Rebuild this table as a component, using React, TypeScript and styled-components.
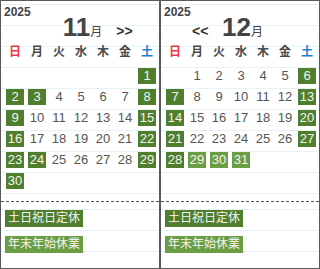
import React from 'react';
import styled, { createGlobalStyle } from 'styled-components';

const GlobalStyle = createGlobalStyle`
  html, body {
    margin: 0;
    padding: 0;
    background: #fff;
  }
  body {
    font-family: "Liberation Sans", "Noto Sans CJK JP", sans-serif;
  }
`;

const DARK = '#4f7f2c';
const LIGHT = '#6b9e43';
const RULE = '#e7f2f6';

const Frame = styled.div`
  display: flex;
  width: 320px;
  height: 269px;
`;

const Panel = styled.section`
  width: 160px;
  height: 269px;
  box-sizing: border-box;
  border: 1px solid #5a5a5a;
  display: flex;
  flex-direction: column;
  background: #fff;
`;

const CalendarArea = styled.div`
  height: 200px;
  box-sizing: border-box;
  padding: 5px 0 0 3px;
  background: repeating-linear-gradient(
    180deg,
    transparent 0 3px,
    ${RULE} 3px 4px,
    transparent 4px 21px
  );
`;

const Year = styled.div`
  height: 12px;
  font-size: 12px;
  line-height: 12px;
  font-weight: 700;
  color: #444;
`;

const MonthRow = styled.div`
  margin-top: -4px;
  padding-left: 2px;
  height: 26px;
  display: flex;
  justify-content: center;
  align-items: baseline;
  gap: 14px;
`;

const Nav = styled.span<{ $hidden?: boolean }>`
  width: 16px;
  font-size: 14px;
  font-weight: 700;
  line-height: 26px;
  color: #333;
  visibility: ${p => (p.$hidden ? 'hidden' : 'visible')};
`;

const MonthTitle = styled.span`
  line-height: 26px;
  color: #444;
`;

const MonthNum = styled.span`
  font-size: 26px;
  font-weight: 700;
`;

const MonthUnit = styled.span`
  font-size: 12px;
`;

const WeekRow = styled.div`
  display: grid;
  grid-template-columns: repeat(7, 22px);
  height: 26px;
  box-sizing: border-box;
  padding-top: 1px;
  line-height: 22px;
  font-size: 12px;
  font-weight: 700;
`;

const WeekDay = styled.span<{ $tone: 'sun' | 'sat' | 'plain' }>`
  text-align: center;
  color: ${p => (p.$tone === 'sun' ? '#e8383d' : p.$tone === 'sat' ? '#1f7ecb' : '#4a4a4a')};
`;

const DayGrid = styled.div`
  display: grid;
  grid-template-columns: repeat(7, 22px);
  grid-auto-rows: 21px;
`;

const Day = styled.span<{ $mark?: 'dark' | 'light' }>`
  margin: 2px 2px 0;
  height: 16px;
  font-size: 13px;
  line-height: 16px;
  text-align: center;
  color: ${p => (p.$mark ? '#f4f4f4' : '#555')};
  background: ${p => (p.$mark === 'dark' ? DARK : p.$mark === 'light' ? LIGHT : 'transparent')};
`;

const Legend = styled.div`
  flex: 1;
  border-top: 1px dashed #555;
  padding: 8px 4px 0;
  display: flex;
  flex-direction: column;
  align-items: flex-start;
  gap: 9px;
  background: repeating-linear-gradient(
    180deg,
    transparent 0 7px,
    ${RULE} 7px 8px,
    transparent 8px 21px
  );
`;

const LegendTag = styled.span<{ $mark: 'dark' | 'light' }>`
  padding: 0 3px;
  height: 17px;
  font-size: 12px;
  line-height: 17px;
  color: #f4f4f4;
  background: ${p => (p.$mark === 'dark' ? DARK : LIGHT)};
`;

type Mark = 'dark' | 'light' | undefined;

interface MonthData {
  month: number;
  offset: number;
  days: number;
  marks: Record<number, Mark>;
  prev?: boolean;
  next?: boolean;
}

const WEEK = ['日', '月', '火', '水', '木', '金', '土'];

const months: MonthData[] = [
  {
    month: 11,
    offset: 6,
    days: 30,
    next: true,
    marks: {
      1: 'dark', 2: 'dark', 3: 'dark', 8: 'dark', 9: 'dark', 15: 'dark', 16: 'dark',
      22: 'dark', 23: 'dark', 24: 'dark', 29: 'dark', 30: 'dark',
    },
  },
  {
    month: 12,
    offset: 1,
    days: 31,
    prev: true,
    marks: {
      6: 'dark', 7: 'dark', 13: 'dark', 14: 'dark', 20: 'dark', 21: 'dark',
      27: 'dark', 28: 'dark', 29: 'light', 30: 'light', 31: 'light',
    },
  },
];

function MonthPanel({ data }: { data: MonthData }) {
  const cells: (number | null)[] = [];
  for (let i = 0; i < data.offset; i++) cells.push(null);
  for (let d = 1; d <= data.days; d++) cells.push(d);

  return (
    <Panel>
      <CalendarArea>
        <Year>2025</Year>
        <MonthRow>
          <Nav $hidden={!data.prev}>&lt;&lt;</Nav>
          <MonthTitle>
            <MonthNum>{data.month}</MonthNum>
            <MonthUnit>月</MonthUnit>
          </MonthTitle>
          <Nav $hidden={!data.next}>&gt;&gt;</Nav>
        </MonthRow>
        <WeekRow>
          {WEEK.map((w, i) => (
            <WeekDay key={w} $tone={i === 0 ? 'sun' : i === 6 ? 'sat' : 'plain'}>
              {w}
            </WeekDay>
          ))}
        </WeekRow>
        <DayGrid>
          {cells.map((d, i) =>
            d === null ? <span key={'e' + i} /> : (
              <Day key={d} $mark={data.marks[d]}>
                {d}
              </Day>
            )
          )}
        </DayGrid>
      </CalendarArea>
      <Legend>
        <LegendTag $mark="dark">土日祝日定休</LegendTag>
        <LegendTag $mark="light">年末年始休業</LegendTag>
      </Legend>
    </Panel>
  );
}

export default function App() {
  return (
    <>
      <GlobalStyle />
      <Frame>
        {months.map(m => (
          <MonthPanel key={m.month} data={m} />
        ))}
      </Frame>
    </>
  );
}
